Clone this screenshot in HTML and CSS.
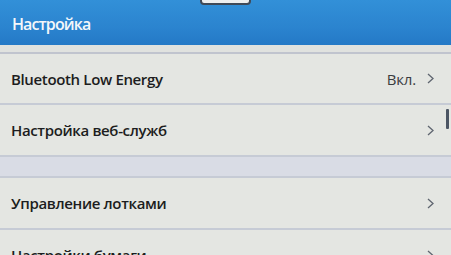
FILE: index.html
```html
<!DOCTYPE html>
<html lang="ru">
<head>
<meta charset="utf-8">
<link rel="stylesheet" href="styles.css">
</head>
<body>
<div class="screen">
  <header class="header">
    <div class="tab"></div>
    <h1 class="title">Настройка</h1>
  </header>
  <div class="strip"></div>
  <ul class="list">
    <li class="row"><span class="label">Bluetooth Low Energy</span><span class="value">Вкл.</span><svg class="chev" viewBox="0 0 7 11"><path d="M1 1 L6 5.5 L1 10" /></svg></li>
    <li class="row"><span class="label">Настройка веб-служб</span><svg class="chev" viewBox="0 0 7 11"><path d="M1 1 L6 5.5 L1 10" /></svg></li>
    <li class="gap"></li>
    <li class="row"><span class="label">Управление лотками</span><svg class="chev" viewBox="0 0 7 11"><path d="M1 1 L6 5.5 L1 10" /></svg></li>
    <li class="row"><span class="label">Настройки бумаги</span><svg class="chev" viewBox="0 0 7 11"><path d="M1 1 L6 5.5 L1 10" /></svg></li>
  </ul>
  <div class="scrollbar"></div>
</div>
</body>
</html>
```
FILE: styles.css
```css
* { box-sizing: border-box; }
html, body { margin: 0; padding: 0; }
body { width: 451px; height: 255px; overflow: hidden; background: #e4e6e2; font-family: "Open Sans", "Noto Sans", sans-serif; }
.screen { position: relative; width: 451px; height: 255px; overflow: hidden; }
.header {
  position: relative;
  height: 45px;
  background: linear-gradient(#3290d8, #2b84cf 60%, #2479c6);
  display: flex;
  align-items: flex-end;
  padding: 0 0 10px 12px;
}
.tab {
  position: absolute;
  left: 200px; top: -4px;
  width: 51px; height: 9px;
  background: #eef0f0;
  border: 2px solid #3f4a58;
  border-radius: 4px;
}
.title { margin: 0; color: #f4f7fa; font-size: 16px; font-weight: 600; line-height: 22px; letter-spacing: -0.9px; }
.strip { height: 9px; background: #e0e2df; border-bottom: 2px solid #c0c4ce; }
.list { list-style: none; margin: 0; padding: 0; }
.row {
  height: 52px;
  display: flex;
  align-items: center;
  padding: 0 17px 0 11px;
  border-bottom: 2px solid #c6cbd5;
  color: #1c1d20;
}
.row:first-child { height: 51px; }
.label { flex: 1; font-size: 15px; font-weight: 600; letter-spacing: -0.35px; }
.value { font-size: 15px; color: #3a3c40; margin-right: 11px; letter-spacing: -0.2px; }
.chev { width: 7px; height: 11px; fill: none; stroke: #5f6670; stroke-width: 1.3; }
.gap { height: 21px; background: #d9dce5; border-bottom: 2px solid #c6cbd5; }
.scrollbar { position: absolute; left: 446px; top: 109px; width: 3px; height: 20px; background: #4b5563; border-radius: 1px; }
```
